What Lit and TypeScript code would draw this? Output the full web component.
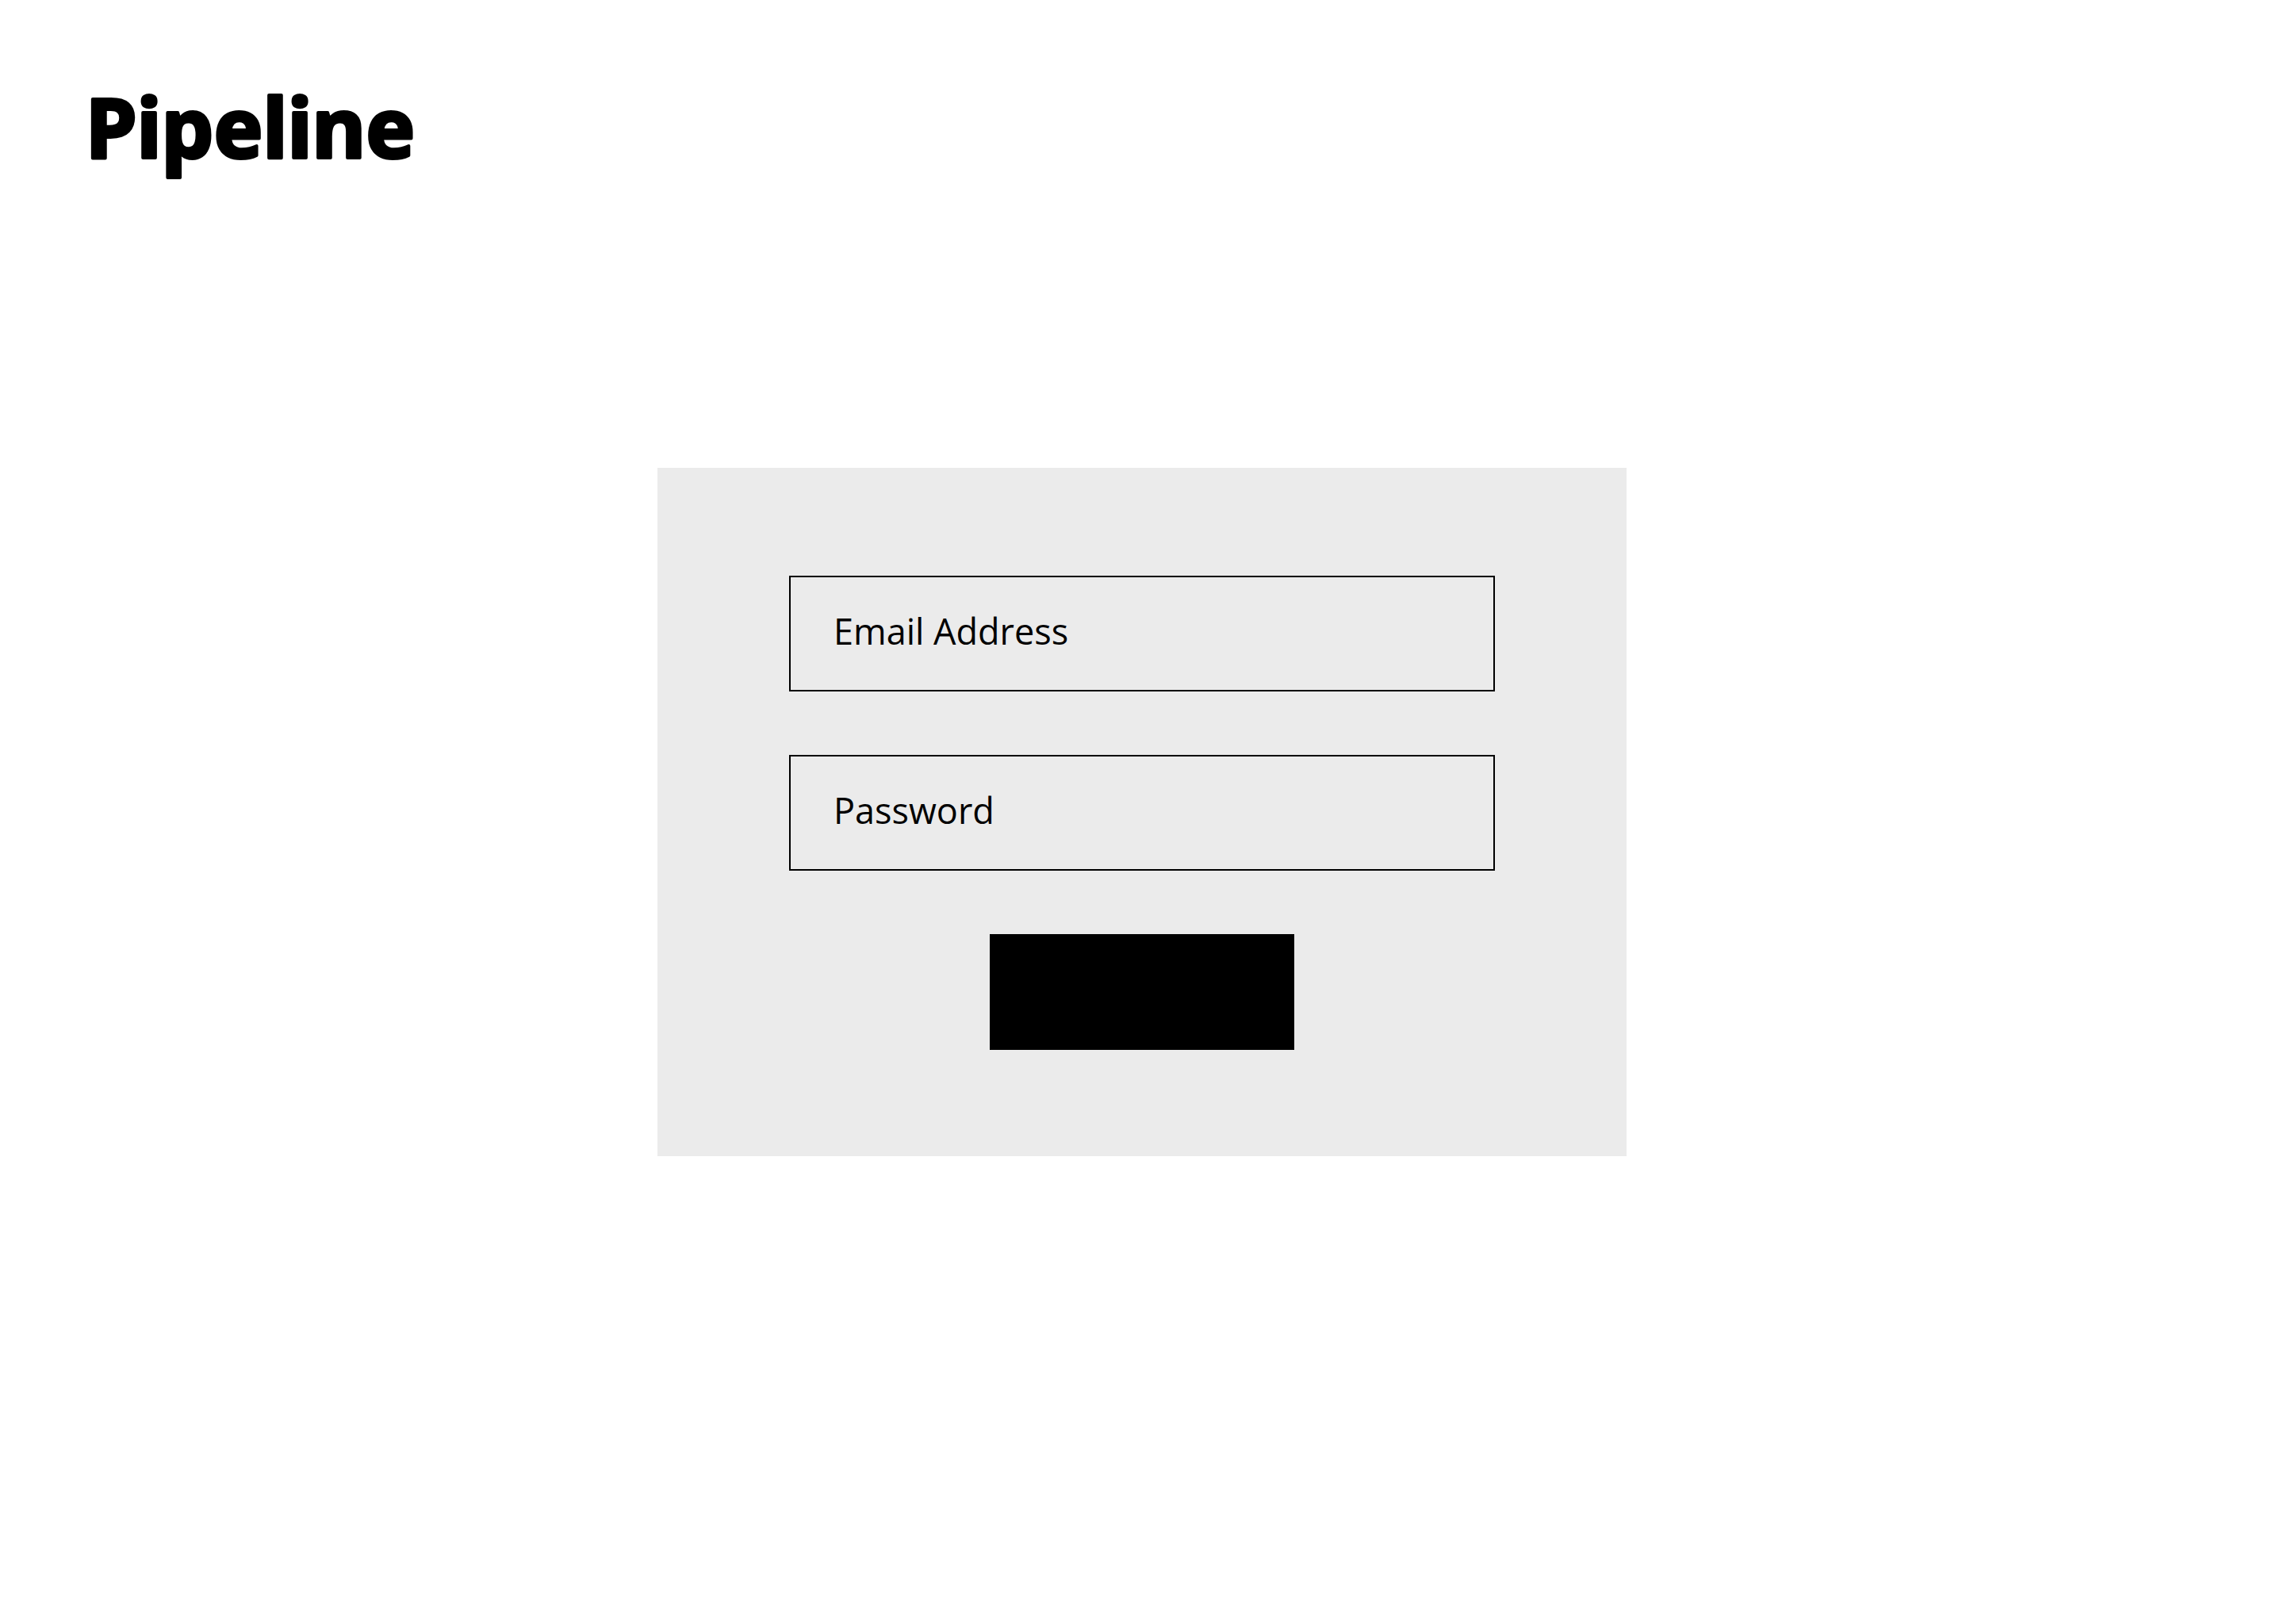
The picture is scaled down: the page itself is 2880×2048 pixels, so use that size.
import { LitElement, html, css } from "lit";
import { customElement } from "lit/decorators.js";

@customElement("app-root")
export class AppRoot extends LitElement {
  static styles = css`
    :host {
      display: block;
      font-family: "Open Sans", "Noto Sans", sans-serif;
      color: #000;
    }

    .page {
      box-sizing: border-box;
      min-height: 100vh;
      display: grid;
      grid-template-rows: 1fr auto 1fr;
      background: #fff;
    }

    .header {
      padding: 96px 108px 0;
    }

    .brand {
      margin: 0;
    }

    .wordmark {
      display: block;
      width: 430px;
      height: 136px;
      overflow: visible;
    }

    /* A rounded outline softens the corners of the bold letters. */
    .wordmark text {
      font-family: "Noto Sans", "Open Sans", sans-serif;
      font-size: 104px;
      font-weight: 700;
      fill: #000;
      stroke: #000;
      stroke-width: 4px;
      stroke-linejoin: round;
    }

    .card {
      box-sizing: border-box;
      justify-self: center;
      width: 100%;
      max-width: 1222px;
      padding: 136px 166px 134px;
      display: flex;
      flex-direction: column;
      align-items: center;
      gap: 80px;
      background: #ebebeb;
    }

    .field {
      box-sizing: border-box;
      width: 100%;
      height: 146px;
      margin: 0;
      padding: 0 54px 8px;
      border: 2px solid #000;
      border-radius: 0;
      background: transparent;
      color: inherit;
      font-family: inherit;
      font-size: 45px;
    }

    .field::placeholder {
      color: #000;
      opacity: 1;
    }

    .submit {
      width: 384px;
      height: 146px;
      margin: 0;
      padding: 0;
      border: 0;
      border-radius: 0;
      background: #000;
      cursor: pointer;
    }
  `;

  render() {
    return html`
      <div class="page">
        <header class="header">
          <h1 class="brand">
            <svg class="wordmark" viewBox="0 0 430 136">
              <text x="0" y="103">Pipeline</text>
            </svg>
          </h1>
        </header>
        <form class="card" @submit=${(e: Event) => e.preventDefault()}>
          <input class="field" type="email" name="email" autocomplete="email"
            aria-label="Email Address" placeholder="Email Address" />
          <input class="field" type="password" name="password" autocomplete="current-password"
            aria-label="Password" placeholder="Password" />
          <button class="submit" type="submit" aria-label="Log in"></button>
        </form>
      </div>
    `;
  }
}
